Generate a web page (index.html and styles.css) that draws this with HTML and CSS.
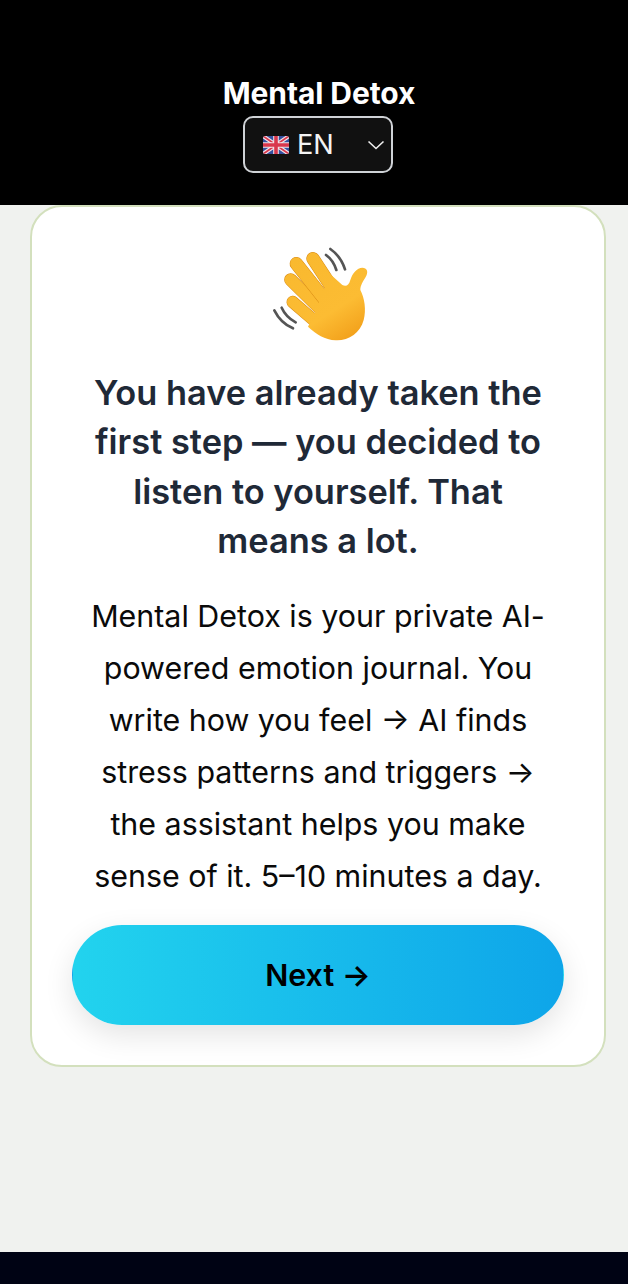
FILE: index.html
```html
<!DOCTYPE html>
<html lang="en">
<head>
<meta charset="utf-8">
<title>Mental Detox</title>
<link rel="stylesheet" href="styles.css">
</head>
<body>
<header class="topbar">
  <h1 class="brand">Mental Detox</h1>
  <div class="lang">
    <svg class="flag" viewBox="0 0 26 18" width="26" height="18" aria-hidden="true">
      <defs><clipPath id="fl"><rect x="0" y="0" width="26" height="18" rx="2.5"/></clipPath></defs>
      <g clip-path="url(#fl)">
        <rect width="26" height="18" fill="#34509f"/>
        <path d="M0 0L26 18M26 0L0 18" stroke="#f2e4e8" stroke-width="4"/>
        <path d="M0 0L26 18M26 0L0 18" stroke="#d9374c" stroke-width="1.8"/>
        <path d="M13 0V18M0 9H26" stroke="#f2e4e8" stroke-width="5.6"/>
        <path d="M13 0V18M0 9H26" stroke="#d9374c" stroke-width="3.6"/>
      </g>
    </svg>
    <span class="lang-code">EN</span>
    <svg class="chev" viewBox="0 0 18 10" width="18" height="10" aria-hidden="true"><path d="M1.5 1.5L9 8.5L16.5 1.5" fill="none" stroke="#f0f0f0" stroke-width="1.6"/></svg>
  </div>
</header>
<main class="stage">
  <section class="card">
    <svg class="wave" viewBox="0 0 390 360" width="130" height="120" role="img" aria-label="Waving hand">
      <defs>
        <linearGradient id="hand" gradientUnits="userSpaceOnUse" x1="130" y1="70" x2="290" y2="320">
          <stop offset="0" stop-color="#f9b92f"/>
          <stop offset="0.65" stop-color="#fcbc33"/>
          <stop offset="1" stop-color="#f29f1a"/>
        </linearGradient>
      </defs>
      <g fill="none" stroke="#555" stroke-width="8" stroke-linecap="round">
        <path d="M232 42C252 56 268 78 276 103"/>
        <path d="M219 60C233 70 244 86 250 105"/>
        <path d="M64 226C76 250 96 270 120 280"/>
        <path d="M86 218C94 236 110 252 128 262"/>
      </g>
      <g fill="none" stroke-linecap="round">
        <path d="M119 201L190 262" stroke="#d98a12" stroke-width="37"/>
        <path d="M119 201L190 262" stroke="url(#hand)" stroke-width="34"/>
        <path d="M113 134L205 225" stroke="#d98a12" stroke-width="39"/>
        <path d="M113 134L205 225" stroke="url(#hand)" stroke-width="36"/>
        <path d="M130 86L220 200" stroke="#d98a12" stroke-width="40"/>
        <path d="M130 86L220 200" stroke="url(#hand)" stroke-width="37"/>
        <path d="M180 71L250 178" stroke="#d98a12" stroke-width="40"/>
        <path d="M180 71L250 178" stroke="url(#hand)" stroke-width="37"/>
      </g>
      <path fill="url(#hand)" d="M232 118L268 150C280 156 288 150 292 135C298 115 312 98 328 98C342 98 346 110 340 122C330 140 322 150 322 165C335 190 340 225 332 255C322 295 285 318 248 316C215 314 190 298 165 275L186 232L204 186Z"/>
    </svg>
    <h2 class="headline">You have already taken the first step — you decided to listen to yourself. That means a lot.</h2>
    <p class="copy">Mental Detox is your private AI-powered emotion journal. You write how you feel → AI finds stress patterns and triggers → the assistant helps you make sense of it. 5–10 minutes a day.</p>
    <button class="next" type="button">Next →</button>
  </section>
</main>
<footer class="strip"></footer>
</body>
</html>
```
FILE: styles.css
```css
* { box-sizing: border-box; }
html, body { height: 100%; }
body {
  margin: 0;
  min-height: 1284px;
  display: flex;
  flex-direction: column;
  background: #f0f2ef;
  font-family: Inter, "Liberation Sans", sans-serif;
}
.topbar {
  height: 205px;
  background: #000;
  display: flex;
  flex-direction: column;
  align-items: center;
  padding: 76px 0 0 8px;
  flex: none;
}
.brand {
  margin: 0 0 6px 2px;
  font-size: 30px;
  line-height: 34px;
  font-weight: 700;
  letter-spacing: -0.1px;
  color: #fff;
}
.lang {
  width: 150px;
  height: 57px;
  display: flex;
  align-items: center;
  padding: 0 6px 0 18px;
  background: #111;
  border: 2px solid #cfd2d6;
  border-radius: 10px;
  color: #f4f4f4;
}
.flag { flex: none; margin-right: 8px; }
.lang-code { font-size: 27.2px; line-height: 34px; flex: 1; }
.chev { flex: none; }
.stage {
  flex: 1;
  padding: 0 22px 0 30px;
}
.card {
  width: 576px;
  height: 862px;
  background: #fff;
  border: 2px solid #d3e0bd;
  border-radius: 32px;
  display: flex;
  flex-direction: column;
  align-items: center;
  padding: 28px 40px 0;
}
.wave { display: block; flex: none; }
.headline {
  margin: 13px 0 0;
  padding: 0 12px;
  font-size: 34.4px;
  line-height: 49.4px;
  font-weight: 600;
  color: #1f2937;
  text-align: center;
}
.copy {
  margin: 24px 0 0;
  padding: 0 12px;
  font-size: 30.4px;
  line-height: 52px;
  color: #0a0a0a;
  text-align: center;
}
.next {
  margin-top: 23px;
  width: 492px;
  height: 100px;
  flex: none;
  border: 1px solid transparent;
  border-radius: 50px;
  background: linear-gradient(90deg, #22d3ee, #0ea5e9);
  box-shadow: 0 10px 30px rgba(0, 0, 0, 0.11);
  color: #000;
  font: 600 30.4px/36px Inter, "Liberation Sans", sans-serif;
}
.strip {
  height: 32px;
  flex: none;
  background: #000314;
}
```
